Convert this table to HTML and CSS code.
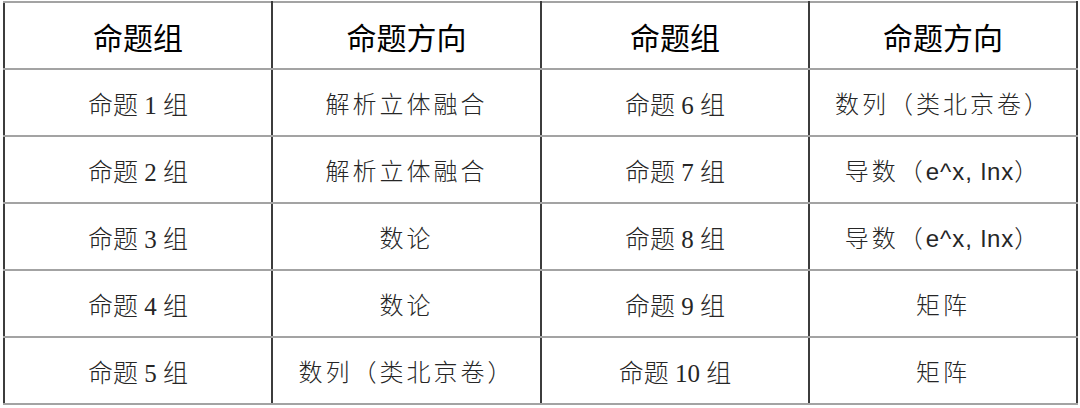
FILE: index.html
```html
<!DOCTYPE html>
<html lang="zh">
<head>
<meta charset="utf-8">
<link rel="stylesheet" href="styles.css">
</head>
<body>
<table class="grid">
  <colgroup>
    <col class="c1"><col class="c2"><col class="c3"><col class="c4">
  </colgroup>
  <thead>
    <tr>
      <th>命题组</th><th>命题方向</th><th>命题组</th><th>命题方向</th>
    </tr>
  </thead>
  <tbody>
    <tr>
      <td>命题 1 组</td><td class="dir">解析立体融合</td>
      <td>命题 6 组</td><td class="dir">数列（类北京卷）</td>
    </tr>
    <tr>
      <td>命题 2 组</td><td class="dir">解析立体融合</td>
      <td>命题 7 组</td><td class="dir">导数（<span class="latin">e^x, lnx</span>）</td>
    </tr>
    <tr>
      <td>命题 3 组</td><td class="dir">数论</td>
      <td>命题 8 组</td><td class="dir">导数（<span class="latin">e^x, lnx</span>）</td>
    </tr>
    <tr>
      <td>命题 4 组</td><td class="dir">数论</td>
      <td>命题 9 组</td><td class="dir">矩阵</td>
    </tr>
    <tr>
      <td>命题 5 组</td><td class="dir">数列（类北京卷）</td>
      <td>命题 10 组</td><td class="dir">矩阵</td>
    </tr>
  </tbody>
</table>
</body>
</html>
```

FILE: styles.css
```css
html, body {
  margin: 0;
  padding: 0;
  background: #ffffff;
}
body {
  padding: 1px 0 0 3px;
}
.grid {
  border-collapse: collapse;
  table-layout: fixed;
  width: 1073px;
  font-family: "Liberation Serif", "Noto Sans CJK SC", serif;
  color: #262626;
}
.c1 { width: 268px; }
.c2 { width: 269px; }
.c3 { width: 268px; }
.c4 { width: 268px; }
.grid th,
.grid td {
  height: 65px;
  padding: 0;
  text-align: center;
  vertical-align: middle;
  border-left: 2px solid #3c3c3c;
  border-right: 2px solid #3c3c3c;
  border-top: 2px solid #a3a3a3;
  border-bottom: 2px solid #a3a3a3;
  white-space: nowrap;
}
.grid th {
  font-family: "Noto Sans CJK SC", sans-serif;
  font-size: 30px;
  font-weight: 400;
  color: #000000;
}
.grid td {
  font-size: 25px;
  font-weight: 300;
}
.grid td.dir {
  font-family: "Noto Sans CJK SC", sans-serif;
  font-size: 24px;
  letter-spacing: 3px;
}
.latin {
  font-family: "Liberation Sans", sans-serif;
  letter-spacing: 1px;
}
```
